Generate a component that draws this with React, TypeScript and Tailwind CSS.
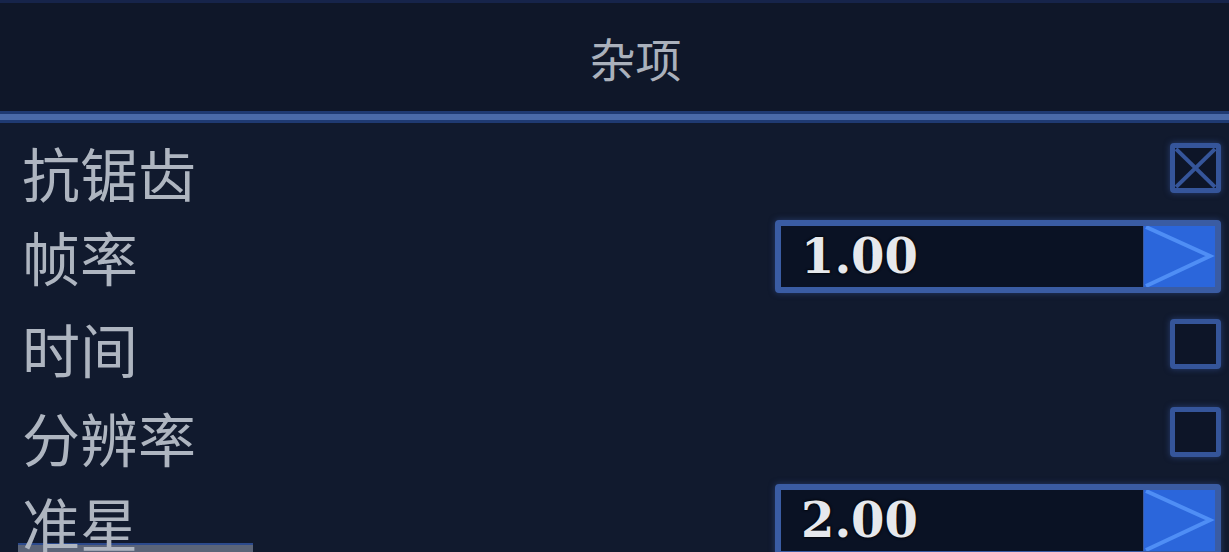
/* Settings panel — "杂项" (misc) section */

type Row = {
  label: string;
  labelPad: string;
  kind: "check" | "number";
  checked?: boolean;
  value?: string;
  focused?: boolean;
};

const rows: Row[] = [
  { label: "抗锯齿", labelPad: "pt-[8px]", kind: "check", checked: true },
  { label: "帧率", labelPad: "pt-[0px]", kind: "number", value: "1.00" },
  { label: "时间", labelPad: "pt-[7px]", kind: "check", checked: false },
  { label: "分辨率", labelPad: "pt-[9px]", kind: "check", checked: false },
  { label: "准星", labelPad: "pt-[4px]", kind: "number", value: "2.00", focused: true },
];

/* ─── Checkbox ───────────────────────────────────────────────────────────── */
function Checkbox({ checked }: { checked: boolean }) {
  return (
    <div className="relative w-[51px] h-[50px] rounded-[4px] border-[5px] border-[#35559a] bg-[#0d1528] shadow-[0_0_6px_rgba(59,92,170,0.55)]">
      {checked && (
        <svg viewBox="0 0 41 40" className="absolute inset-0 w-full h-full">
          <line x1="1" y1="1" x2="40" y2="39" stroke="#35559a" strokeWidth="4" />
          <line x1="40" y1="1" x2="1" y2="39" stroke="#35559a" strokeWidth="4" />
        </svg>
      )}
    </div>
  );
}

/* ─── Number field with step arrow ──────────────────────────────────────── */
function NumberField({ value }: { value: string }) {
  return (
    <div className="flex w-[446px] h-[73px] rounded-[4px] border-[6px] border-[#3a5ca3] bg-[#3a5ca3] shadow-[0_0_6px_rgba(59,92,170,0.5)]">
      <div className="flex-1 flex items-center pl-[20px] bg-[#0a1224]">
        <span className="font-['DejaVu_Serif',serif] font-bold text-[48px] leading-none text-[#e6e8ec] [text-shadow:0_0_3px_#000,0_0_2px_#000]">
          {value}
        </span>
      </div>
      <div className="w-[71px] ml-[1px] bg-[#2b66db]">
        <svg viewBox="0 0 71 61" className="w-full h-full" preserveAspectRatio="none">
          <polyline
            points="2,1 66,30 2,60"
            fill="none"
            stroke="#4f8ef5"
            strokeWidth="4"
            strokeLinejoin="miter"
          />
        </svg>
      </div>
    </div>
  );
}

/* ─── Main Component ─────────────────────────────────────────────────────── */
export default function App() {
  return (
    <div className="w-[1229px] h-[552px] overflow-hidden bg-[#111a2e] font-['Noto_Sans_CJK_SC','Noto_Sans',sans-serif]">
      {/* ── Header ──────────────────────────────────────────────────── */}
      <div className="h-[111px] flex items-center justify-center pl-[42px] bg-[#0f1729] border-t-[3px] border-[#16244a]">
        <h1 className="text-[46px] leading-none font-normal text-[#aab1bc]">杂项</h1>
      </div>

      {/* ── Divider ─────────────────────────────────────────────────── */}
      <div className="h-[12px] border-y-[3px] border-[#1f3a72] bg-[#4a6aa8]" />

      {/* ── Rows ────────────────────────────────────────────────────── */}
      <div className="flex flex-col pt-[1px]">
        {rows.map((row) => (
          <div
            key={row.label}
            className="relative h-[88px] flex items-center justify-between pl-[22px] pr-[8px]"
          >
            {/* Focus bar behind the selected label */}
            {row.focused && (
              <div className="absolute left-[18px] top-[67px] w-[235px] h-[9px] bg-[#5b6478] border-t-[2px] border-[#2c4a8c]" />
            )}
            <span className={`relative ${row.labelPad} text-[58px] leading-none text-[#aeb5c0]`}>
              {row.label}
            </span>
            {row.kind === "check" ? (
              <Checkbox checked={!!row.checked} />
            ) : (
              <NumberField value={row.value ?? ""} />
            )}
          </div>
        ))}
      </div>
    </div>
  );
}
